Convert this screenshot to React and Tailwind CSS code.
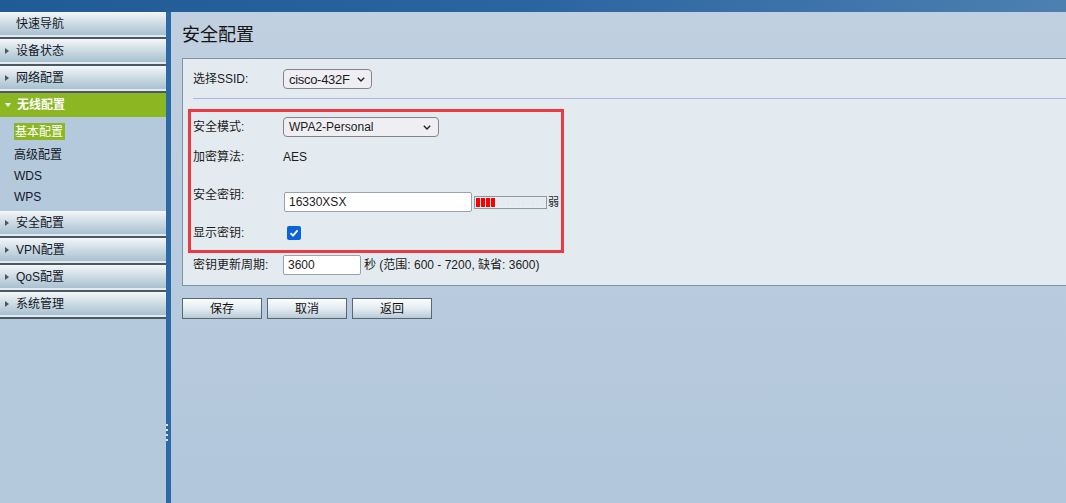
import React from "react";

const FONT = "font-['Liberation_Sans','Noto_Sans_CJK_SC',sans-serif]";

function NavHeader({ label, arrow = true }) {
  return (
    <div>
      <div className="h-[23px] flex items-center bg-gradient-to-b from-[#f3f7f9] via-[#cddbe4] to-[#a8c1d0]">
        {arrow ? (
          <span className="ml-[5px] w-0 h-0 border-y-[3px] border-y-transparent border-l-[4px] border-l-[#4d5560]" />
        ) : (
          <span className="ml-[5px] w-[4px]" />
        )}
        <span className="ml-[7px] text-[12px] leading-[14px] text-[#111827]">{label}</span>
      </div>
      <div className="h-[2px] bg-[#e2eaef]" />
      <div className="h-[2px] bg-[#4b5761]" />
    </div>
  );
}

function Chevron() {
  return (
    <svg width="8" height="5" viewBox="0 0 8 5" className="shrink-0">
      <path d="M0.8 0.8 L4 4 L7.2 0.8" fill="none" stroke="#222" strokeWidth="1.4" />
    </svg>
  );
}

function Sidebar() {
  return (
    <div className="w-[166px] shrink-0 h-full bg-[#b5c9dc] flex flex-col">
      <NavHeader label="快速导航" arrow={false} />
      <NavHeader label="设备状态" />
      <NavHeader label="网络配置" />
      <div className="h-[24px] flex items-center bg-[#8cb722]">
        <span className="ml-[5px] w-0 h-0 border-x-[3px] border-x-transparent border-t-[4px] border-t-white" />
        <span className="ml-[6px] text-[12px] leading-[14px] font-bold text-white">无线配置</span>
      </div>
      <div className="pt-[6px] pb-[4px] text-[12px] leading-[14px] text-[#111827]">
        <div className="h-[17px] flex items-center pl-[14px] mb-[4px]">
          <span className="bg-[#8cb722] text-white px-[1px] h-[17px] w-[51px] flex items-center">基本配置</span>
        </div>
        <div className="h-[21px] flex items-center pl-[14px]">高级配置</div>
        <div className="h-[21px] flex items-center pl-[14px]">WDS</div>
        <div className="h-[21px] flex items-center pl-[14px]">WPS</div>
      </div>
      <NavHeader label="安全配置" />
      <NavHeader label="VPN配置" />
      <NavHeader label="QoS配置" />
      <NavHeader label="系统管理" />
    </div>
  );
}

function Divider() {
  return (
    <div className="w-[5px] shrink-0 h-full bg-[#2c6aa7] flex flex-col items-center pt-[400px]">
      <div className="flex flex-col gap-[3px] -ml-[3px] mt-[12px]">
        <span className="w-[2px] h-[2px] bg-[#dfe6ee]" />
        <span className="w-[2px] h-[2px] bg-[#dfe6ee]" />
        <span className="w-[2px] h-[2px] bg-[#dfe6ee]" />
        <span className="w-[2px] h-[2px] bg-[#dfe6ee]" />
      </div>
    </div>
  );
}

function StrengthBar() {
  const segs = Array.from({ length: 14 });
  return (
    <div className="ml-[2px] w-[73px] h-[13px] border border-[#8a9ba8] bg-[#e8eef4] flex items-center gap-[1px] px-[1px]">
      {segs.map((_, i) => (
        <span
          key={i}
          className={i < 4 ? "w-[4px] h-[9px] bg-[#ff0000]" : "w-[4px] h-[9px] bg-[#e4ecf3]"}
        />
      ))}
    </div>
  );
}

function Button({ children }) {
  return (
    <div className="w-[80px] h-[21px] border border-[#566874] bg-gradient-to-b from-[#fbfdfe] via-[#e4ecf1] to-[#b9cad5] flex items-center justify-center text-[12px] leading-[14px] text-[#111]">
      {children}
    </div>
  );
}

function Content() {
  return (
    <div className="flex-1 h-full overflow-hidden bg-gradient-to-b from-[#c1d0e0] to-[#b2c7dc]">
      <div className="h-[46px] flex items-center pl-[11px] text-[18px] leading-[22px] text-[#151515]">安全配置</div>
      <div className="ml-[11px] w-[900px] border border-[#7f93a5] bg-[#e4ebf0] pb-[10px] text-[12px] leading-[14px] text-[#1c1c1c]">
        <div className="mt-[10px] h-[20px] flex items-center pl-[10px]">
          <span className="w-[90px]">选择SSID:</span>
          <div className="h-[20px] w-[89px] border border-[#858585] rounded-[4px] bg-[#efeef3] flex items-center justify-between pl-[5px] pr-[6px] text-[13px] leading-[15px]">
            <span className="tracking-[-0.3px]">cisco-432F</span>
            <Chevron />
          </div>
        </div>
        <div className="mt-[9px] ml-[10px] h-[1px] bg-[#b3b3e8]" />
        <div className="mt-[10px] ml-[5px] w-[376px] border-[3px] border-[#ec3b40] pl-[2px]">
          <div className="h-[30px] flex items-center">
            <span className="w-[90px]">安全模式:</span>
            <div className="h-[20px] w-[156px] border border-[#858585] rounded-[4px] bg-[#efeef3] flex items-center justify-between pl-[5px] pr-[7px]">
              <span>WPA2-Personal</span>
              <Chevron />
            </div>
          </div>
          <div className="h-[30px] flex items-center">
            <span className="w-[90px]">加密算法:</span>
            <span>AES</span>
          </div>
          <div className="pt-[16px] pb-[4px] flex items-start">
            <span className="w-[91px]">安全密钥:</span>
            <div className="mt-[4px] flex items-center">
              <div className="h-[20px] w-[188px] border border-[#98a3ad] rounded-[2px] bg-white flex items-center pl-[4px]">16330XSX</div>
              <StrengthBar />
              <span className="ml-[1px] text-[11px]">弱</span>
            </div>
          </div>
          <div className="h-[34px] flex items-center">
            <span className="w-[94px]">显示密钥:</span>
            <div className="w-[14px] h-[14px] rounded-[2px] bg-[#0b63d8] flex items-center justify-center">
              <svg width="10" height="10" viewBox="0 0 10 10">
                <path d="M1.5 5.2 L4 7.6 L8.6 2.4" fill="none" stroke="white" strokeWidth="1.8" />
              </svg>
            </div>
          </div>
        </div>
        <div className="mt-[2px] h-[20px] flex items-center pl-[10px]">
          <span className="w-[90px]">密钥更新周期:</span>
          <div className="h-[20px] w-[78px] border border-[#98a3ad] rounded-[2px] bg-white flex items-center pl-[4px]">3600</div>
          <span className="ml-[3px]">秒 (范围: 600 - 7200, 缺省: 3600)</span>
        </div>
      </div>
      <div className="mt-[12px] ml-[11px] flex gap-[5px]">
        <Button>保存</Button>
        <Button>取消</Button>
        <Button>返回</Button>
      </div>
    </div>
  );
}

export default function App() {
  return (
    <div className={`w-[1066px] h-[503px] overflow-hidden flex flex-col ${FONT}`}>
      <div className="h-[12px] shrink-0 bg-gradient-to-r from-[#1f5b96] via-[#2b65a0] to-[#4c80b1]" />
      <div className="flex-1 flex min-h-0">
        <Sidebar />
        <Divider />
        <Content />
      </div>
    </div>
  );
}
